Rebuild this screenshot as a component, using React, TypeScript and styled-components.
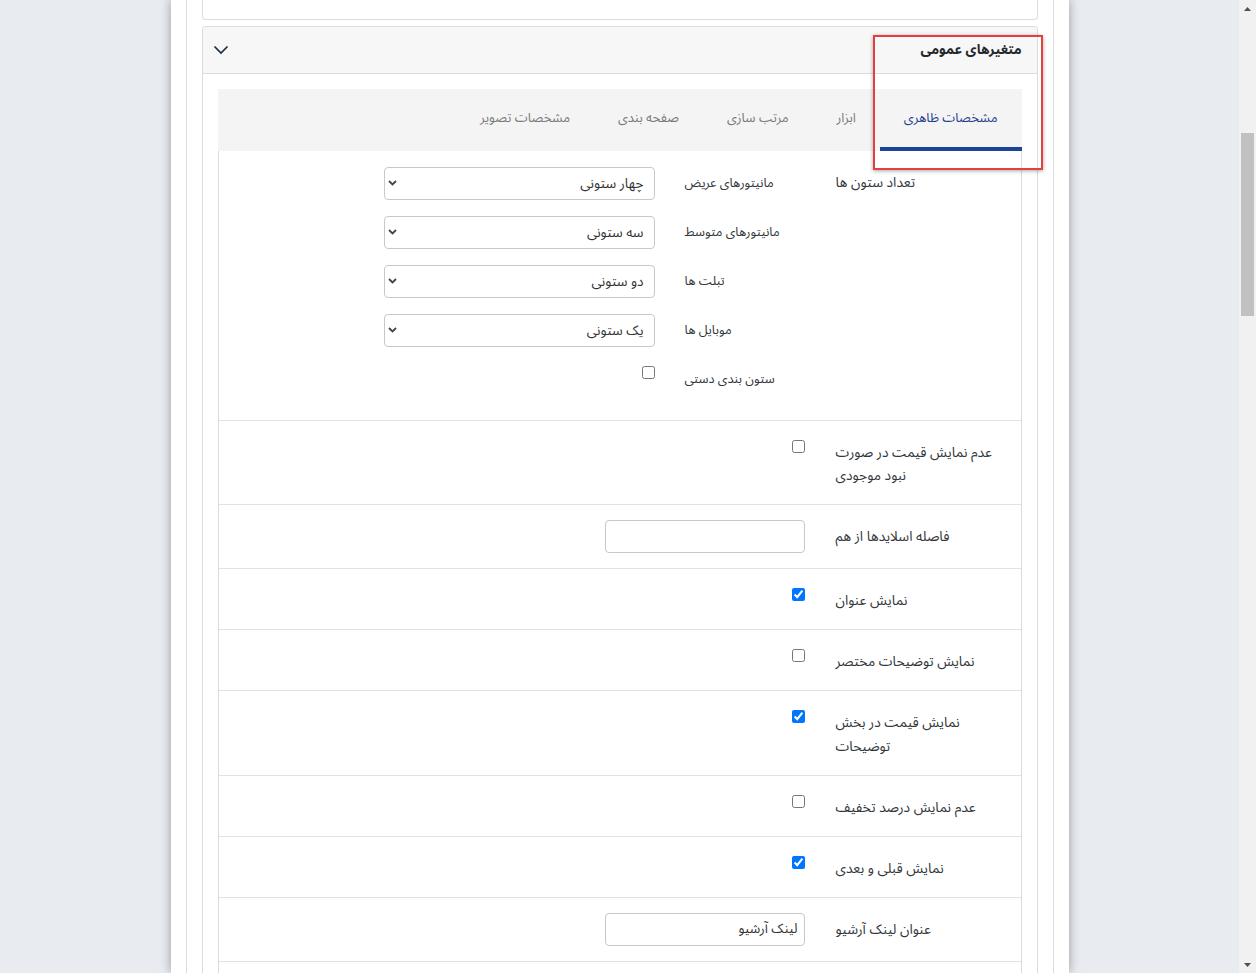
import React from "react";
import styled, { createGlobalStyle } from "styled-components";

const GlobalStyle = createGlobalStyle`
  html, body {
    margin: 0;
    padding: 0;
    height: 100%;
    overflow: hidden;
    background: #e8ebf0;
  }
  * {
    box-sizing: border-box;
  }
`;

const FONT = `"Noto Sans Arabic", "Vazirmatn", "DejaVu Sans", sans-serif`;

const Page = styled.div`
  position: relative;
  display: flex;
  height: 973px;
  background: #e8ebf0;
  font-family: ${FONT};
  color: #333;
`;

const Canvas = styled.div`
  flex: 1;
  display: flex;
  justify-content: center;
  overflow: hidden;
`;

const Panel = styled.div`
  width: 898px;
  background: #fff;
  box-shadow: 0 0 10px rgba(0, 0, 0, 0.35);
  padding: 0 15px;
`;

const OuterCard = styled.div`
  height: 100%;
  border-left: 1px solid #dedede;
  border-right: 1px solid #dedede;
  padding: 0 15px;
  direction: rtl;
`;

const TopCard = styled.div`
  height: 20px;
  border: 1px solid #dcdcdc;
  border-top: none;
  border-radius: 0 0 4px 4px;
  margin-bottom: 6px;
`;

const Accordion = styled.div`
  border: 1px solid #dcdcdc;
  border-bottom: none;
  border-radius: 4px 4px 0 0;
`;

const AccordionHeader = styled.div`
  height: 47px;
  display: flex;
  align-items: center;
  justify-content: space-between;
  padding: 0 15px 0 10px;
  background: #f7f7f7;
  border-bottom: 1px solid #dcdcdc;
  border-radius: 4px 4px 0 0;
`;

const AccordionTitle = styled.div`
  font-size: 13.5px;
  font-weight: 700;
  color: #23282d;
  margin-top: -2px;
`;

const AccordionBody = styled.div`
  padding: 15px 15px 0;
`;

const TabBar = styled.div`
  display: flex;
  height: 62px;
  background: #f4f4f4;
`;

const Tab = styled.div<{ $active?: boolean }>`
  display: flex;
  align-items: center;
  justify-content: center;
  padding: 0 24px;
  font-size: 13px;
  color: ${(p) => (p.$active ? "#1f3f8f" : "#7a7a7a")};
  border-bottom: 4px solid ${(p) => (p.$active ? "#1a4599" : "transparent")};
  white-space: nowrap;
`;

const TabContent = styled.div`
  border-left: 1px solid #dcdcdc;
  border-right: 1px solid #dcdcdc;
`;

const Row = styled.div<{ $first?: boolean }>`
  display: grid;
  grid-template-columns: 185px 1fr;
  border-top: ${(p) => (p.$first ? "none" : "1px solid #e2e2e2")};
`;

const Label = styled.div`
  padding: 20px 15px 16.6px 0;
  font-size: 13.8px;
  line-height: 23.4px;
  text-align: left;
  color: #32373c;
`;

const Control = styled.div`
  padding: 15px 31px 15px 0;
  display: flex;
  flex-direction: column;
  align-items: flex-start;
`;

const SubGroup = styled.div`
  display: flex;
  flex-direction: column;
  gap: 16px;
  margin-bottom: 10px;
`;

const SubRow = styled.div`
  display: grid;
  grid-template-columns: 120px 271px;
  column-gap: 30px;
  align-items: center;
  min-height: 33px;
`;

const SubLabel = styled.div`
  font-size: 12.7px;
  line-height: 24px;
  text-align: left;
  color: #32373c;
  padding-top: 1px;
`;

const SelectWrap = styled.div`
  position: relative;
  width: 271px;
  height: 33px;
`;

const Select = styled.select`
  appearance: none;
  width: 100%;
  height: 100%;
  border: 1px solid #c8c8c8;
  border-radius: 4px;
  background: #fff;
  padding: 0 10px 0 30px;
  font-family: ${FONT};
  font-size: 13.6px;
  color: #333;
  direction: rtl;
`;

const SelectArrow = styled.svg`
  position: absolute;
  left: 4px;
  top: 14px;
  pointer-events: none;
`;

const TextInput = styled.input`
  width: 200px;
  height: 33px;
  border: 1px solid #c8c8c8;
  border-radius: 4px;
  background: #fff;
  padding: 0 6px;
  font-family: ${FONT};
  font-size: 13.4px;
  color: #333;
  direction: rtl;
`;

const Check = styled.input`
  width: 13px;
  height: 13px;
  margin: 4px 0 0;
  align-self: flex-start;
`;

const Highlight = styled.div`
  position: absolute;
  left: 873px;
  top: 35px;
  width: 170px;
  height: 135px;
  border: 2px solid #e2403f;
  box-shadow: 0 1px 4px rgba(0, 0, 0, 0.35);
  pointer-events: none;
`;

const Scrollbar = styled.div`
  width: 17px;
  background: #f1f1f1;
  display: flex;
  flex-direction: column;
  align-items: center;
`;

const ScrollArrow = styled.div<{ $down?: boolean }>`
  height: 17px;
  width: 17px;
  display: flex;
  align-items: center;
  justify-content: center;
  margin-top: ${(p) => (p.$down ? "auto" : "0")};
`;

const ScrollThumb = styled.div`
  width: 13px;
  height: 183px;
  margin-top: 116px;
  background: #c1c1c1;
`;

type SelectFieldProps = { value: string; options: string[] };
const SelectField = ({ value, options }: SelectFieldProps) => (
  <SelectWrap>
    <Select defaultValue={value}>
      {options.map((o) => (
        <option key={o}>{o}</option>
      ))}
    </Select>
    <SelectArrow width="9" height="6" viewBox="0 0 9 6">
      <path d="M1 1l3.5 3.5L8 1" fill="none" stroke="#444" strokeWidth="1.8" />
    </SelectArrow>
  </SelectWrap>
);

const columnOptions = ["یک ستونی", "دو ستونی", "سه ستونی", "چهار ستونی", "پنج ستونی", "شش ستونی"];

const tabs = ["مشخصات ظاهری", "ابزار", "مرتب سازی", "صفحه بندی", "مشخصات تصویر"];

const columnRows = [
  { label: "مانیتورهای عریض", value: "چهار ستونی" },
  { label: "مانیتورهای متوسط", value: "سه ستونی" },
  { label: "تبلت ها", value: "دو ستونی" },
  { label: "موبایل ها", value: "یک ستونی" },
];

type Setting =
  | { kind: "check"; label: string; checked: boolean }
  | { kind: "text"; label: string; value: string };

const settings: Setting[] = [
  { kind: "check", label: "عدم نمایش قیمت در صورت نبود موجودی", checked: false },
  { kind: "text", label: "فاصله اسلایدها از هم", value: "" },
  { kind: "check", label: "نمایش عنوان", checked: true },
  { kind: "check", label: "نمایش توضیحات مختصر", checked: false },
  { kind: "check", label: "نمایش قیمت در بخش توضیحات", checked: true },
  { kind: "check", label: "عدم نمایش درصد تخفیف", checked: false },
  { kind: "check", label: "نمایش قبلی و بعدی", checked: true },
  { kind: "text", label: "عنوان لینک آرشیو", value: "لینک آرشیو" },
  { kind: "check", label: "نمایش تعداد محصولات", checked: false },
];

export default function App() {
  return (
    <>
      <GlobalStyle />
      <Page>
        <Canvas>
          <Panel>
            <OuterCard>
              <TopCard />
              <Accordion>
                <AccordionHeader>
                  <AccordionTitle>متغیرهای عمومی</AccordionTitle>
                  <svg width="16" height="10" viewBox="0 0 16 10">
                    <path d="M1.5 1.5l6.5 6.5 6.5-6.5" fill="none" stroke="#1d2a4d" strokeWidth="1.7" />
                  </svg>
                </AccordionHeader>
                <AccordionBody>
                  <TabBar>
                    {tabs.map((t, i) => (
                      <Tab key={t} $active={i === 0}>
                        {t}
                      </Tab>
                    ))}
                  </TabBar>
                  <TabContent>
                    <Row $first>
                      <Label>تعداد ستون ها</Label>
                      <Control>
                        <SubGroup>
                          {columnRows.map((r) => (
                            <SubRow key={r.label}>
                              <SubLabel>{r.label}</SubLabel>
                              <SelectField value={r.value} options={columnOptions} />
                            </SubRow>
                          ))}
                          <SubRow>
                            <SubLabel>ستون بندی دستی</SubLabel>
                            <Check type="checkbox" />
                          </SubRow>
                        </SubGroup>
                      </Control>
                    </Row>
                    {settings.map((s) => (
                      <Row key={s.label}>
                        <Label>{s.label}</Label>
                        <Control>
                          {s.kind === "check" ? (
                            <Check type="checkbox" defaultChecked={s.checked} />
                          ) : (
                            <TextInput type="text" defaultValue={s.value} />
                          )}
                        </Control>
                      </Row>
                    ))}
                  </TabContent>
                </AccordionBody>
              </Accordion>
            </OuterCard>
          </Panel>
        </Canvas>
        <Scrollbar>
          <ScrollArrow>
            <svg width="7" height="4" viewBox="0 0 7 4">
              <path d="M0 4L3.5 0L7 4Z" fill="#505050" />
            </svg>
          </ScrollArrow>
          <ScrollThumb />
          <ScrollArrow $down>
            <svg width="7" height="4" viewBox="0 0 7 4">
              <path d="M0 0L3.5 4L7 0Z" fill="#505050" />
            </svg>
          </ScrollArrow>
        </Scrollbar>
        <Highlight />
      </Page>
    </>
  );
}
